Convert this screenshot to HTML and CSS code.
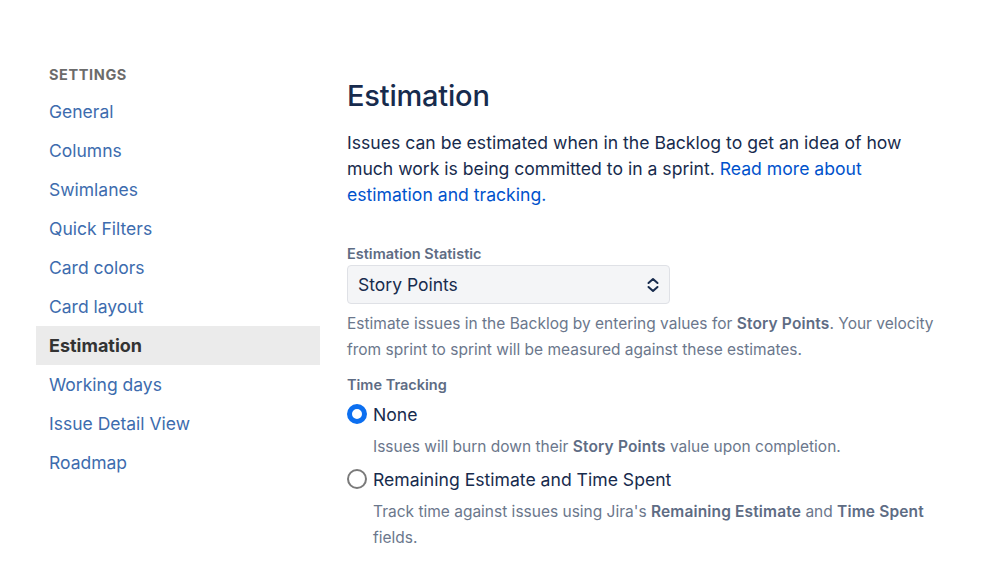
FILE: index.html
```html
<!DOCTYPE html>
<html lang="en">
<head>
<meta charset="utf-8">
<title>Estimation</title>
<link rel="stylesheet" href="styles.css">
</head>
<body>
<div class="page">
  <nav class="sidebar">
    <div class="sidebar-title">SETTINGS</div>
    <ul class="nav">
      <li><a class="nav-link" href="#">General</a></li>
      <li><a class="nav-link" href="#">Columns</a></li>
      <li><a class="nav-link" href="#">Swimlanes</a></li>
      <li><a class="nav-link" href="#">Quick Filters</a></li>
      <li><a class="nav-link" href="#">Card colors</a></li>
      <li><a class="nav-link" href="#">Card layout</a></li>
      <li><a class="nav-link active" href="#">Estimation</a></li>
      <li><a class="nav-link" href="#">Working days</a></li>
      <li><a class="nav-link" href="#">Issue Detail View</a></li>
      <li><a class="nav-link" href="#">Roadmap</a></li>
    </ul>
  </nav>
  <main class="content">
    <h1 class="title">Estimation</h1>
    <p class="intro">Issues can be estimated when in the Backlog to get an idea of how much work is being committed to in a sprint. <a href="#">Read more about estimation and tracking.</a></p>

    <div class="field">
      <div class="label">Estimation Statistic</div>
      <div class="select">
        <span>Story Points</span>
        <svg class="chev" width="14" height="16" viewBox="0 0 14 16"><path d="M2.5 6 L7 2 L11.5 6 M2.5 10 L7 14 L11.5 10" fill="none" stroke="#172b4d" stroke-width="2" stroke-linecap="round" stroke-linejoin="round"/></svg>
      </div>
      <p class="help">Estimate issues in the Backlog by entering values for <b>Story Points</b>. Your velocity from sprint to sprint will be measured against these estimates.</p>
    </div>

    <div class="field">
      <div class="label">Time Tracking</div>
      <div class="radio-row">
        <span class="radio checked"></span>
        <span class="radio-text">None</span>
      </div>
      <p class="help indent">Issues will burn down their <b>Story Points</b> value upon completion.</p>
      <div class="radio-row">
        <span class="radio"></span>
        <span class="radio-text">Remaining Estimate and Time Spent</span>
      </div>
      <p class="help indent">Track time against issues using Jira's <b>Remaining Estimate</b> and <b>Time Spent</b> fields.</p>
    </div>
  </main>
</div>
</body>
</html>
```
FILE: styles.css
```css
* { box-sizing: border-box; }
html, body { margin: 0; padding: 0; background: #fff; }
body {
  font-family: Inter, "Liberation Sans", sans-serif;
  color: #172b4d;
}
.page {
  display: flex;
  padding: 65px 0 0 36px;
}
.sidebar {
  width: 284px;
  flex: none;
}
.sidebar-title {
  font-size: 14.5px;
  font-weight: 700;
  color: #6b6b6b;
  letter-spacing: 0.6px;
  padding-left: 13px;
  height: 20px;
  line-height: 20px;
  margin-bottom: 7px;
}
.nav { list-style: none; margin: 0; padding: 0; }
.nav-link {
  display: block;
  height: 39px;
  line-height: 39px;
  padding-left: 13px;
  font-size: 17.5px;
  color: #3d6cae;
  text-decoration: none;
}
.nav-link.active {
  background: #ebebeb;
  color: #333;
  font-weight: 700;
  font-size: 18px;
}
.content {
  margin-left: 27px;
  width: 595px;
}
.title {
  font-size: 29px;
  font-weight: 500;
  margin: 13px 0 0;
  line-height: 36px;
  letter-spacing: -0.2px;
}
.intro {
  font-size: 17.6px;
  line-height: 26px;
  margin: 16px 0 0;
  max-width: 560px;
}
.intro a { color: #0052cc; text-decoration: none; }
.field { margin-top: 36px; }
.field + .field { margin-top: 12px; }
.label {
  font-size: 14.5px;
  font-weight: 600;
  color: #5e6c84;
  line-height: 20px;
}
.select {
  margin-top: 1px;
  width: 323px;
  height: 39px;
  background: #f4f5f7;
  border: 1px solid #dfe1e6;
  border-radius: 4px;
  display: flex;
  align-items: center;
  justify-content: space-between;
  padding: 0 9px 0 10px;
  font-size: 17.5px;
}
.help {
  font-size: 15.5px;
  line-height: 26px;
  color: #6b778c;
  margin: 7px 0 0;
}
.help b { color: #5e6c84; font-weight: 600; letter-spacing: 0.15px; }
.help.indent { padding-left: 26px; margin-top: 5px; }
.radio-row {
  display: flex;
  align-items: center;
  gap: 6px;
  height: 30px;
  margin-top: 4px;
}
.radio {
  width: 20px;
  height: 20px;
  border-radius: 50%;
  border: 2px solid #7a7a7a;
  background: #fff;
  flex: none;
}
.radio.checked {
  border: 5px solid #0c6ff0;
}
.radio-text { font-size: 17.6px; }
```
